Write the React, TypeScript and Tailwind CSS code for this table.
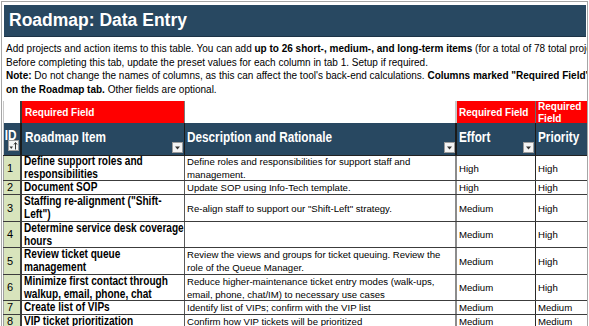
import React from "react"

type Row = {
  id: number
  h: string
  item: string[]
  desc: string[]
  effort: string
  priority: string
}

const rows: Row[] = [
  {
    id: 1,
    h: "h-[25px]",
    item: ["Define support roles and", "responsibilities"],
    desc: ["Define roles and responsibilities for support staff and", "management."],
    effort: "High",
    priority: "High",
  },
  { id: 2, h: "h-[14px]", item: ["Document SOP"], desc: ["Update SOP using Info-Tech template."], effort: "High", priority: "High" },
  {
    id: 3,
    h: "h-[27px]",
    item: ['Staffing re-alignment ("Shift-', 'Left")'],
    desc: ['Re-align staff to support our "Shift-Left" strategy.'],
    effort: "Medium",
    priority: "High",
  },
  { id: 4, h: "h-[26px]", item: ["Determine service desk coverage", "hours"], desc: [], effort: "Medium", priority: "High" },
  {
    id: 5,
    h: "h-[27px]",
    item: ["Review ticket queue", "management"],
    desc: ["Review the views and groups for ticket queuing. Review the", "role of the Queue Manager."],
    effort: "Medium",
    priority: "High",
  },
  {
    id: 6,
    h: "h-[26px]",
    item: ["Minimize first contact through", "walkup, email, phone, chat"],
    desc: ["Reduce higher-maintenance ticket entry modes (walk-ups,", "email, phone, chat/IM) to necessary use cases"],
    effort: "Medium",
    priority: "High",
  },
  { id: 7, h: "h-[14px]", item: ["Create list of VIPs"], desc: ["Identify list of VIPs; confirm with the VIP list"], effort: "Medium", priority: "Medium" },
  { id: 8, h: "h-[14px]", item: ["VIP ticket prioritization"], desc: ["Confirm how VIP tickets will be prioritized"], effort: "Medium", priority: "Medium" },
]

function FilterButton() {
  return (
    <div className="w-[11px] h-[11px] bg-[#f4f4f4] border border-[#9c9c9c] flex items-center justify-center">
      <svg width="7" height="4" viewBox="0 0 7 4">
        <path d="M1 0.5 L6 0.5 L3.5 3.5 Z" fill="#333" />
      </svg>
    </div>
  )
}

function SortButton() {
  return (
    <div className="w-[11px] h-[11px] bg-[#f4f4f4] border border-[#9c9c9c] flex items-center justify-center">
      <svg width="9" height="8" viewBox="0 0 9 8">
        <path d="M0.5 4.5 L4 4.5 L2.25 7 Z" fill="#333" />
        <path d="M6.5 1 L6.5 7.5" stroke="#333" strokeWidth="1" />
        <path d="M5 2.5 L6.5 0.5 L8 2.5" stroke="#333" strokeWidth="1" fill="none" />
      </svg>
    </div>
  )
}

// the sheet uses a narrow bold face; squeeze Arial to get the same widths
function Narrow({ children, className = "" }: { children: React.ReactNode; className?: string }) {
  return <div className={`origin-left scale-x-[0.84] whitespace-nowrap ${className}`}>{children}</div>
}

export default function App() {
  return (
    <div className="w-[589px] h-[326px] bg-white overflow-hidden font-['Liberation_Sans',Arial,sans-serif] text-black">
      <div className="ml-[1px] mt-[1px] w-[587px] h-[325px] border-l border-t border-r border-[#a6a6a6] overflow-hidden">
        {/* title */}
        <div className="ml-[2px] mt-[3px] mr-[1px] h-[32px] bg-[#284861] flex items-center pl-[5px] border-b border-[#1d3346]">
          <span className="text-white font-bold text-[17.5px] leading-none">Roadmap: Data Entry</span>
        </div>

        {/* intro */}
        <div className="mt-[5px] pl-[4px] text-[10px] leading-[13.5px] whitespace-nowrap">
          <div>
            Add projects and action items to this table. You can add{" "}
            <b>up to 26 short-, medium-, and long-term items</b> (for a total of 78 total projects).
          </div>
          <div>Before completing this tab, update the preset values for each column in tab 1. Setup if required.</div>
          <div>
            <b>Note:</b> Do not change the names of columns, as this can affect the tool's back-end calculations.{" "}
            <b>Columns marked "Required Field"</b>
          </div>
          <div>
            <b>on the Roadmap tab.</b> Other fields are optional.
          </div>
        </div>

        {/* table */}
        <div className="ml-[1px] mt-[5px]">
          {/* required row */}
          <div className="flex h-[22px] text-white font-bold text-[10px]">
            <div className="w-[19px] border-l border-[#c8c8c8] border-r-2 border-r-[#3a3a3a]" />
            <div className="w-[163px] bg-[#ff0000] border-r border-[#7a7a7a] flex items-center pl-[3px]">Required Field</div>
            <div className="w-[272px] border-r-2 border-[#c8c8c8]" />
            <div className="w-[79px] bg-[#ff0000] border-r border-[#6a6a6a] flex items-center pl-[2px]">Required Field</div>
            <div className="w-[51px] bg-[#ff0000] pl-[2px] leading-[12px] overflow-hidden">Required Field</div>
          </div>

          {/* header row */}
          <div className="flex h-[33px] bg-[#284861] text-white font-bold border-b border-[#222] text-[14px]">
            <div className="w-[19px] border-l border-[#c8c8c8] border-r-2 border-r-[#1a1a1a] flex flex-col items-end pr-[1px] pt-[6px]">
              <Narrow className="leading-[13px] self-start pl-[1px] scale-x-[0.9]">ID</Narrow>
              <div className="mt-[-2px]">
                <SortButton />
              </div>
            </div>
            <div className="w-[163px] border-r border-[#1a1a1a] flex items-center pl-[3px] relative">
              <Narrow className="mt-[-3px]">Roadmap Item</Narrow>
              <div className="absolute right-[1px] bottom-[2px]">
                <FilterButton />
              </div>
            </div>
            <div className="w-[272px] border-r-2 border-[#1a1a1a] flex items-center pl-[2px] relative">
              <Narrow className="mt-[-3px]">Description and Rationale</Narrow>
              <div className="absolute right-[0px] bottom-[2px]">
                <FilterButton />
              </div>
            </div>
            <div className="w-[79px] border-r border-[#1a1a1a] flex items-center pl-[2px] relative">
              <Narrow className="mt-[-3px]">Effort</Narrow>
              <div className="absolute right-[1px] bottom-[2px]">
                <FilterButton />
              </div>
            </div>
            <div className="w-[51px] flex items-center pl-[2px] overflow-hidden">
              <Narrow className="mt-[-3px]">Priority</Narrow>
            </div>
          </div>

          {/* data rows */}
          {rows.map((r) => (
            <div key={r.id} className={`flex ${r.h} border-b border-[#3c3c3c] leading-[13px] text-[9.6px]`}>
              <div className="w-[19px] bg-[#d8e4bc] border-l border-[#a0a0a0] border-r-2 border-r-[#3a3a3a] flex items-center pl-[3px] text-[11px]">
                {r.id}
              </div>
              <div className="w-[163px] border-r border-[#5a5a5a] flex flex-col justify-center pl-[2px] font-bold text-[12px] overflow-hidden">
                <Narrow className="scale-x-[0.83]">
                  {r.item.map((l) => (
                    <div key={l}>{l}</div>
                  ))}
                </Narrow>
              </div>
              <div className="w-[272px] border-r-2 border-[#8c8c8c] flex flex-col justify-center pl-[2px] whitespace-nowrap overflow-hidden">
                {r.desc.map((l) => (
                  <div key={l}>{l}</div>
                ))}
              </div>
              <div className="w-[79px] border-r border-[#2a2a2a] flex items-center pl-[2px]">{r.effort}</div>
              <div className="w-[51px] flex items-center pl-[2px]">{r.priority}</div>
            </div>
          ))}
        </div>
      </div>
    </div>
  )
}
